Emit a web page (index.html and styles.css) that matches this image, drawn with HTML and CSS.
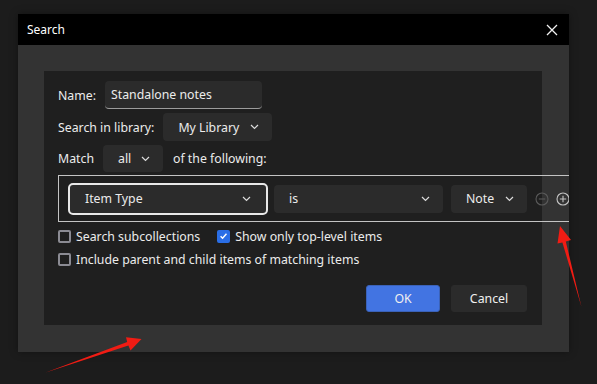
FILE: index.html
```html
<!DOCTYPE html>
<html lang="en">
<head>
    <meta charset="UTF-8">
    <meta name="viewport" content="width=device-width, initial-scale=1.0">
    <link rel="stylesheet" href="styles.css">
    <title>Search</title>
</head>
<body>
    <div class="ventana">
        <div class="titulo">
            <span>Search</span>
            <svg class="cerrar" width="12" height="12" viewBox="0 0 12 12"><path d="M1 1L11 11M11 1L1 11" stroke="#f2f2f2" stroke-width="1.3" fill="none"/></svg>
        </div>
        <div class="cuerpo">
            <div class="panel">
                <div class="fila fila-nombre">
                    <span class="etiqueta">Name:</span>
                    <div class="campo">Standalone notes</div>
                </div>
                <div class="fila fila-libreria">
                    <span class="etiqueta">Search in library:</span>
                    <div class="desplegable libreria">
                        <span>My Library</span>
                        <svg class="flecha" width="9" height="6" viewBox="0 0 9 6"><path d="M1 1L4.5 4.5L8 1" stroke="#dcdcdc" stroke-width="1.2" fill="none"/></svg>
                    </div>
                </div>
                <div class="fila fila-match">
                    <span class="etiqueta">Match</span>
                    <div class="desplegable todos">
                        <span>all</span>
                        <svg class="flecha" width="9" height="6" viewBox="0 0 9 6"><path d="M1 1L4.5 4.5L8 1" stroke="#dcdcdc" stroke-width="1.2" fill="none"/></svg>
                    </div>
                    <span class="etiqueta">of the following:</span>
                </div>
                <div class="condiciones">
                    <div class="desplegable tipo">
                        <span>Item Type</span>
                        <svg class="flecha" width="9" height="6" viewBox="0 0 9 6"><path d="M1 1L4.5 4.5L8 1" stroke="#dcdcdc" stroke-width="1.2" fill="none"/></svg>
                    </div>
                    <div class="desplegable operador">
                        <span>is</span>
                        <svg class="flecha" width="9" height="6" viewBox="0 0 9 6"><path d="M1 1L4.5 4.5L8 1" stroke="#dcdcdc" stroke-width="1.2" fill="none"/></svg>
                    </div>
                    <div class="desplegable valor">
                        <span>Note</span>
                        <svg class="flecha" width="9" height="6" viewBox="0 0 9 6"><path d="M1 1L4.5 4.5L8 1" stroke="#dcdcdc" stroke-width="1.2" fill="none"/></svg>
                    </div>
                    <svg class="circulo" width="14" height="14" viewBox="0 0 14 14"><circle cx="7" cy="7" r="6" stroke="#5a5a5a" stroke-width="1.1" fill="none"/><path d="M3.8 7H10.2" stroke="#5a5a5a" stroke-width="1.1"/></svg>
                    <svg class="circulo" width="14" height="14" viewBox="0 0 14 14"><circle cx="7" cy="7" r="6" stroke="#c4c4c4" stroke-width="1.1" fill="none"/><path d="M3.8 7H10.2M7 3.8V10.2" stroke="#c4c4c4" stroke-width="1.1"/></svg>
                </div>
                <div class="fila fila-check">
                    <label class="opcion"><span class="caja"></span>Search subcollections</label>
                    <label class="opcion"><span class="caja marcada"><svg width="10" height="10" viewBox="0 0 10 10"><path d="M1.8 5.2L4 7.4L8.3 2.6" stroke="#fff" stroke-width="1.6" fill="none"/></svg></span>Show only top-level items</label>
                </div>
                <div class="fila fila-check2">
                    <label class="opcion"><span class="caja"></span>Include parent and child items of matching items</label>
                </div>
                <div class="botones">
                    <button class="boton aceptar">OK</button>
                    <button class="boton">Cancel</button>
                </div>
            </div>
        </div>
    </div>

    <!-- flechas rojas de la captura -->
    <svg class="anotaciones" width="597" height="384" viewBox="0 0 597 384">
        <polygon points="45,372.7 128.4,345.4 130.5,350.5 141.5,339 126,337.3 127.2,342" fill="#f01c14"/>
        <polygon points="581.5,307 565.8,241.5 571,240 560,226 557.5,243.5 562.4,242.4" fill="#f01c14"/>
    </svg>
</body>
</html>
```

FILE: styles.css
```css
* {
    margin: 0;
    padding: 0;
    box-sizing: border-box;
}
body {
    background-color: #1c1c1c;
    font-family: "Noto Sans", "Open Sans", sans-serif;
    font-size: 12.3px;
    color: #ececec;
    padding: 14px 0 0 18px;
    position: relative;
    height: 384px;
    overflow: hidden;
}
.ventana {
    width: 551px;
    height: 338px;
    background-color: #333333;
    overflow: hidden;
    box-shadow: 0 0 8px rgba(0, 0, 0, 0.35);
}
.titulo {
    height: 31px;
    background-color: #000;
    display: flex;
    align-items: center;
    justify-content: space-between;
    padding: 0 11px 0 9px;
    font-size: 12px;
    color: #fff;
}
.cuerpo {
    padding: 26px 0 0 26px;
}
.panel {
    width: 498px;
    height: 254px;
    background-color: #1f1f1f;
    padding: 10px 0 0 14px;
    display: flex;
    flex-direction: column;
}
.fila {
    display: flex;
    align-items: center;
    gap: 9px;
}
.fila-nombre { height: 28px; margin-bottom: 4px; }
.fila-libreria { height: 28px; margin-bottom: 4px; }
.fila-match { height: 27px; margin-bottom: 3px; }
.fila-match .etiqueta:last-child { margin-left: 1px; }
.campo {
    width: 157px;
    height: 28px;
    background-color: #2b2b2b;
    border-radius: 4px;
    border-bottom: 1px solid #9c9c9c;
    padding: 0 6px;
    display: flex;
    align-items: center;
}
.desplegable {
    display: flex;
    align-items: center;
    justify-content: space-between;
    background-color: #2b2b2b;
    border-radius: 4px;
    padding: 0 13px 0 15px;
    height: 28px;
}
.flecha { display: block; }
.libreria { width: 109px; }
.todos { width: 60px; height: 27px; }
.condiciones {
    width: 520px;
    height: 47px;
    border: 1px solid #c4c4c4;
    display: flex;
    align-items: center;
    padding-left: 9px;
}
.tipo {
    width: 200px;
    height: 32px;
    border: 2px solid #e8e8e8;
    border-radius: 5px;
    padding: 0 15px 0 15px;
}
.operador { width: 169px; margin-left: 6px; }
.valor { width: 76px; margin-left: 8px; }
.circulo { margin-left: 7px; display: block; }
.circulo:first-of-type { margin-left: 0; }
.valor + .circulo { margin-left: 8px; }
.fila-check { height: 24px; margin-top: 2px; gap: 17px; }
.fila-check2 { height: 23px; }
.opcion {
    display: flex;
    align-items: center;
    gap: 5px;
}
.caja {
    width: 13px;
    height: 13px;
    border: 2px solid #8b8b93;
    border-radius: 2px;
    display: flex;
    align-items: center;
    justify-content: center;
}
.marcada {
    background-color: #2a6ee6;
    border-color: #2a6ee6;
}
.botones {
    display: flex;
    justify-content: flex-end;
    gap: 11px;
    padding-right: 15px;
    margin-top: 14px;
}
.boton {
    width: 76px;
    height: 27px;
    border: 1px solid #2b2b2b;
    border-radius: 3px;
    background-color: #2b2b2b;
    color: #f0f0f0;
    font-family: inherit;
    font-size: 12.3px;
}
.aceptar {
    width: 74px;
    background-color: #4274e2;
    border-color: #3b62b8;
}
.anotaciones {
    position: absolute;
    top: 0;
    left: 0;
    pointer-events: none;
}
```
